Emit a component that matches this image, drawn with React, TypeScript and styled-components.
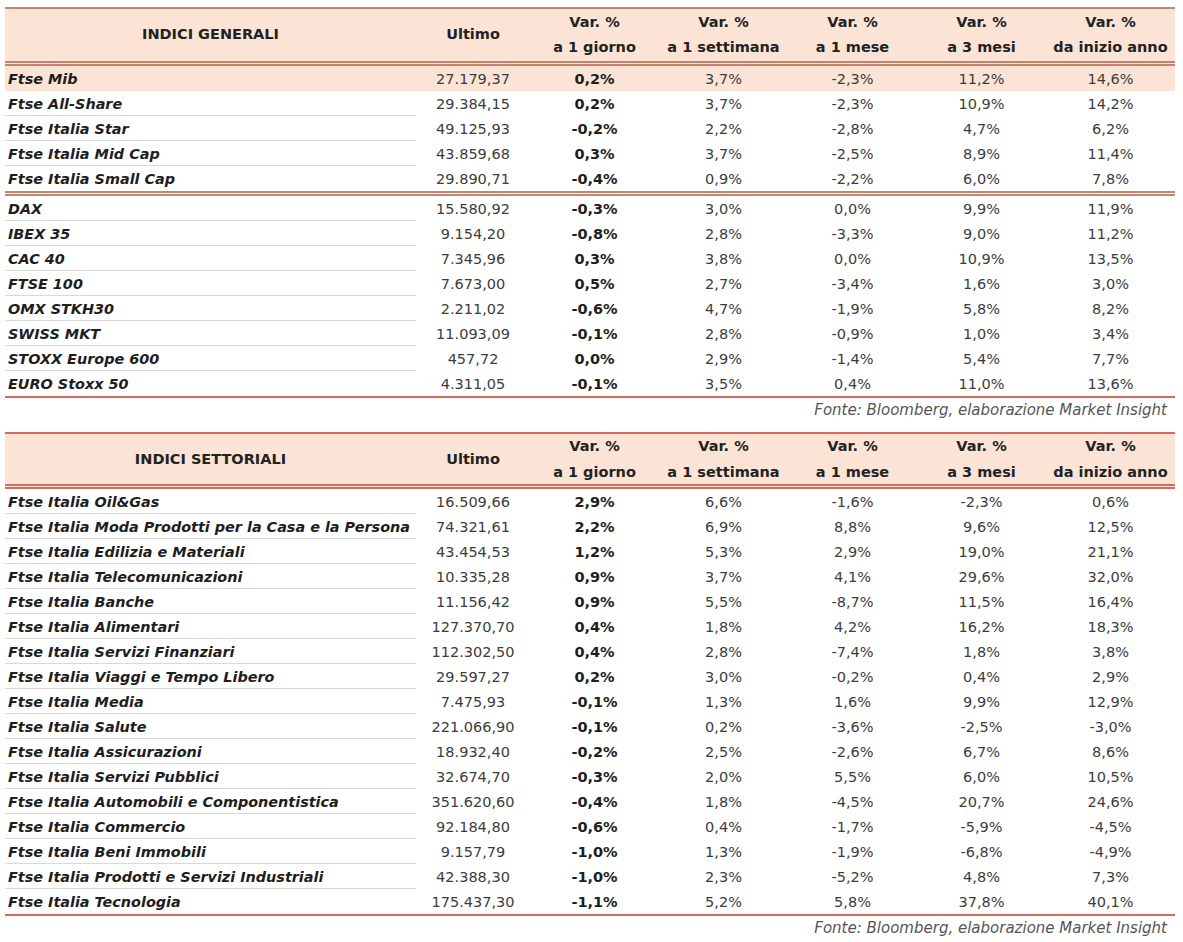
import styled, { createGlobalStyle } from 'styled-components';

const GlobalStyle = createGlobalStyle`
  body {
    margin: 0;
    background: #ffffff;
    font-family: "DejaVu Sans", "Liberation Sans", sans-serif;
    color: #1e1e1e;
  }
`;

const COLS = '411px 114px repeat(5, 129px)';

const Page = styled.div`
  padding: 7px 8px 0 5px;
  width: 1170px;
`;

const Section = styled.section`
  width: 1170px;
  margin-bottom: 10px;
`;

const Head = styled.div<{ $line: string; $h: number }>`
  display: grid;
  grid-template-columns: ${COLS};
  height: ${p => p.$h}px;
  box-sizing: border-box;
  border-top: 2px solid ${p => p.$line};
  border-bottom: 5px double ${p => p.$line};
  background: #fbe4d5;
`;

const HeadCell = styled.div`
  display: flex;
  flex-direction: column;
  align-items: center;
  justify-content: center;
  font-weight: bold;
  font-size: 14.5px;
  line-height: 25.5px;
  color: #222;
  white-space: nowrap;
`;

const Group = styled.div<{ $end: string }>`
  border-bottom: ${p => p.$end};
`;

const Row = styled.div<{ $hi?: boolean }>`
  display: grid;
  grid-template-columns: ${COLS};
  height: 25px;
  background: ${p => (p.$hi ? '#fbe4d5' : 'transparent')};
`;

const Name = styled.div<{ $last?: boolean }>`
  box-sizing: border-box;
  display: flex;
  align-items: center;
  padding: 1px 0 0 3px;
  border-bottom: 1px solid ${p => (p.$last ? 'transparent' : '#d9d9d9')};
  font-weight: bold;
  font-style: italic;
  font-size: 14.4px;
  color: #1e1e1e;
  white-space: nowrap;
`;

const Num = styled.div<{ $bold?: boolean }>`
  display: flex;
  align-items: center;
  justify-content: center;
  font-size: 14.5px;
  font-weight: ${p => (p.$bold ? 'bold' : 'normal')};
  color: ${p => (p.$bold ? '#1e1e1e' : '#3c3c3c')};
  white-space: nowrap;
`;

const Source = styled.div`
  text-align: right;
  padding-right: 8px;
  height: 24px;
  line-height: 24px;
  font-style: italic;
  font-size: 15px;
  color: #555;
`;

type Line = [string, string, string, string, string, string, string];

const generaliA: Line[] = [
  ['Ftse Mib', '27.179,37', '0,2%', '3,7%', '-2,3%', '11,2%', '14,6%'],
  ['Ftse All-Share', '29.384,15', '0,2%', '3,7%', '-2,3%', '10,9%', '14,2%'],
  ['Ftse Italia Star', '49.125,93', '-0,2%', '2,2%', '-2,8%', '4,7%', '6,2%'],
  ['Ftse Italia Mid Cap', '43.859,68', '0,3%', '3,7%', '-2,5%', '8,9%', '11,4%'],
  ['Ftse Italia Small Cap', '29.890,71', '-0,4%', '0,9%', '-2,2%', '6,0%', '7,8%'],
];

const generaliB: Line[] = [
  ['DAX', '15.580,92', '-0,3%', '3,0%', '0,0%', '9,9%', '11,9%'],
  ['IBEX 35', '9.154,20', '-0,8%', '2,8%', '-3,3%', '9,0%', '11,2%'],
  ['CAC 40', '7.345,96', '0,3%', '3,8%', '0,0%', '10,9%', '13,5%'],
  ['FTSE 100', '7.673,00', '0,5%', '2,7%', '-3,4%', '1,6%', '3,0%'],
  ['OMX STKH30', '2.211,02', '-0,6%', '4,7%', '-1,9%', '5,8%', '8,2%'],
  ['SWISS MKT', '11.093,09', '-0,1%', '2,8%', '-0,9%', '1,0%', '3,4%'],
  ['STOXX Europe 600', '457,72', '0,0%', '2,9%', '-1,4%', '5,4%', '7,7%'],
  ['EURO Stoxx 50', '4.311,05', '-0,1%', '3,5%', '0,4%', '11,0%', '13,6%'],
];

const settoriali: Line[] = [
  ['Ftse Italia Oil&Gas', '16.509,66', '2,9%', '6,6%', '-1,6%', '-2,3%', '0,6%'],
  ['Ftse Italia Moda Prodotti per la Casa e la Persona', '74.321,61', '2,2%', '6,9%', '8,8%', '9,6%', '12,5%'],
  ['Ftse Italia Edilizia e Materiali', '43.454,53', '1,2%', '5,3%', '2,9%', '19,0%', '21,1%'],
  ['Ftse Italia Telecomunicazioni', '10.335,28', '0,9%', '3,7%', '4,1%', '29,6%', '32,0%'],
  ['Ftse Italia Banche', '11.156,42', '0,9%', '5,5%', '-8,7%', '11,5%', '16,4%'],
  ['Ftse Italia Alimentari', '127.370,70', '0,4%', '1,8%', '4,2%', '16,2%', '18,3%'],
  ['Ftse Italia Servizi Finanziari', '112.302,50', '0,4%', '2,8%', '-7,4%', '1,8%', '3,8%'],
  ['Ftse Italia Viaggi e Tempo Libero', '29.597,27', '0,2%', '3,0%', '-0,2%', '0,4%', '2,9%'],
  ['Ftse Italia Media', '7.475,93', '-0,1%', '1,3%', '1,6%', '9,9%', '12,9%'],
  ['Ftse Italia Salute', '221.066,90', '-0,1%', '0,2%', '-3,6%', '-2,5%', '-3,0%'],
  ['Ftse Italia Assicurazioni', '18.932,40', '-0,2%', '2,5%', '-2,6%', '6,7%', '8,6%'],
  ['Ftse Italia Servizi Pubblici', '32.674,70', '-0,3%', '2,0%', '5,5%', '6,0%', '10,5%'],
  ['Ftse Italia Automobili e Componentistica', '351.620,60', '-0,4%', '1,8%', '-4,5%', '20,7%', '24,6%'],
  ['Ftse Italia Commercio', '92.184,80', '-0,6%', '0,4%', '-1,7%', '-5,9%', '-4,5%'],
  ['Ftse Italia Beni Immobili', '9.157,79', '-1,0%', '1,3%', '-1,9%', '-6,8%', '-4,9%'],
  ['Ftse Italia Prodotti e Servizi Industriali', '42.388,30', '-1,0%', '2,3%', '-5,2%', '4,8%', '7,3%'],
  ['Ftse Italia Tecnologia', '175.437,30', '-1,1%', '5,2%', '5,8%', '37,8%', '40,1%'],
];

const periods = [
  ['Var. %', 'a 1 giorno'],
  ['Var. %', 'a 1 settimana'],
  ['Var. %', 'a 1 mese'],
  ['Var. %', 'a 3 mesi'],
  ['Var. %', 'da inizio anno'],
];

const BROWN = '#c4846e';
const RED = '#d96a60';

function Header({ title, line, height }: { title: string; line: string; height: number }) {
  return (
    <Head $line={line} $h={height}>
      <HeadCell>{title}</HeadCell>
      <HeadCell>Ultimo</HeadCell>
      {periods.map(([a, b]) => (
        <HeadCell key={b}>
          <span>{a}</span>
          <span>{b}</span>
        </HeadCell>
      ))}
    </Head>
  );
}

function Rows({ data, highlightFirst }: { data: Line[]; highlightFirst?: boolean }) {
  return (
    <>
      {data.map((r, i) => (
        <Row key={r[0]} $hi={highlightFirst && i === 0}>
          <Name $last={i === data.length - 1 || (highlightFirst && i === 0)}>{r[0]}</Name>
          <Num>{r[1]}</Num>
          <Num $bold>{r[2]}</Num>
          <Num>{r[3]}</Num>
          <Num>{r[4]}</Num>
          <Num>{r[5]}</Num>
          <Num>{r[6]}</Num>
        </Row>
      ))}
    </>
  );
}

export default function App() {
  return (
    <Page>
      <GlobalStyle />
      <Section>
        <Header title="INDICI GENERALI" line={BROWN} height={59} />
        <Group $end={`5px double ${BROWN}`}>
          <Rows data={generaliA} highlightFirst />
        </Group>
        <Group $end={`2px solid ${RED}`}>
          <Rows data={generaliB} />
        </Group>
        <Source>Fonte: Bloomberg, elaborazione Market Insight</Source>
      </Section>
      <Section>
        <Header title="INDICI SETTORIALI" line={RED} height={57} />
        <Group $end={`2px solid ${RED}`}>
          <Rows data={settoriali} />
        </Group>
        <Source>Fonte: Bloomberg, elaborazione Market Insight</Source>
      </Section>
    </Page>
  );
}
